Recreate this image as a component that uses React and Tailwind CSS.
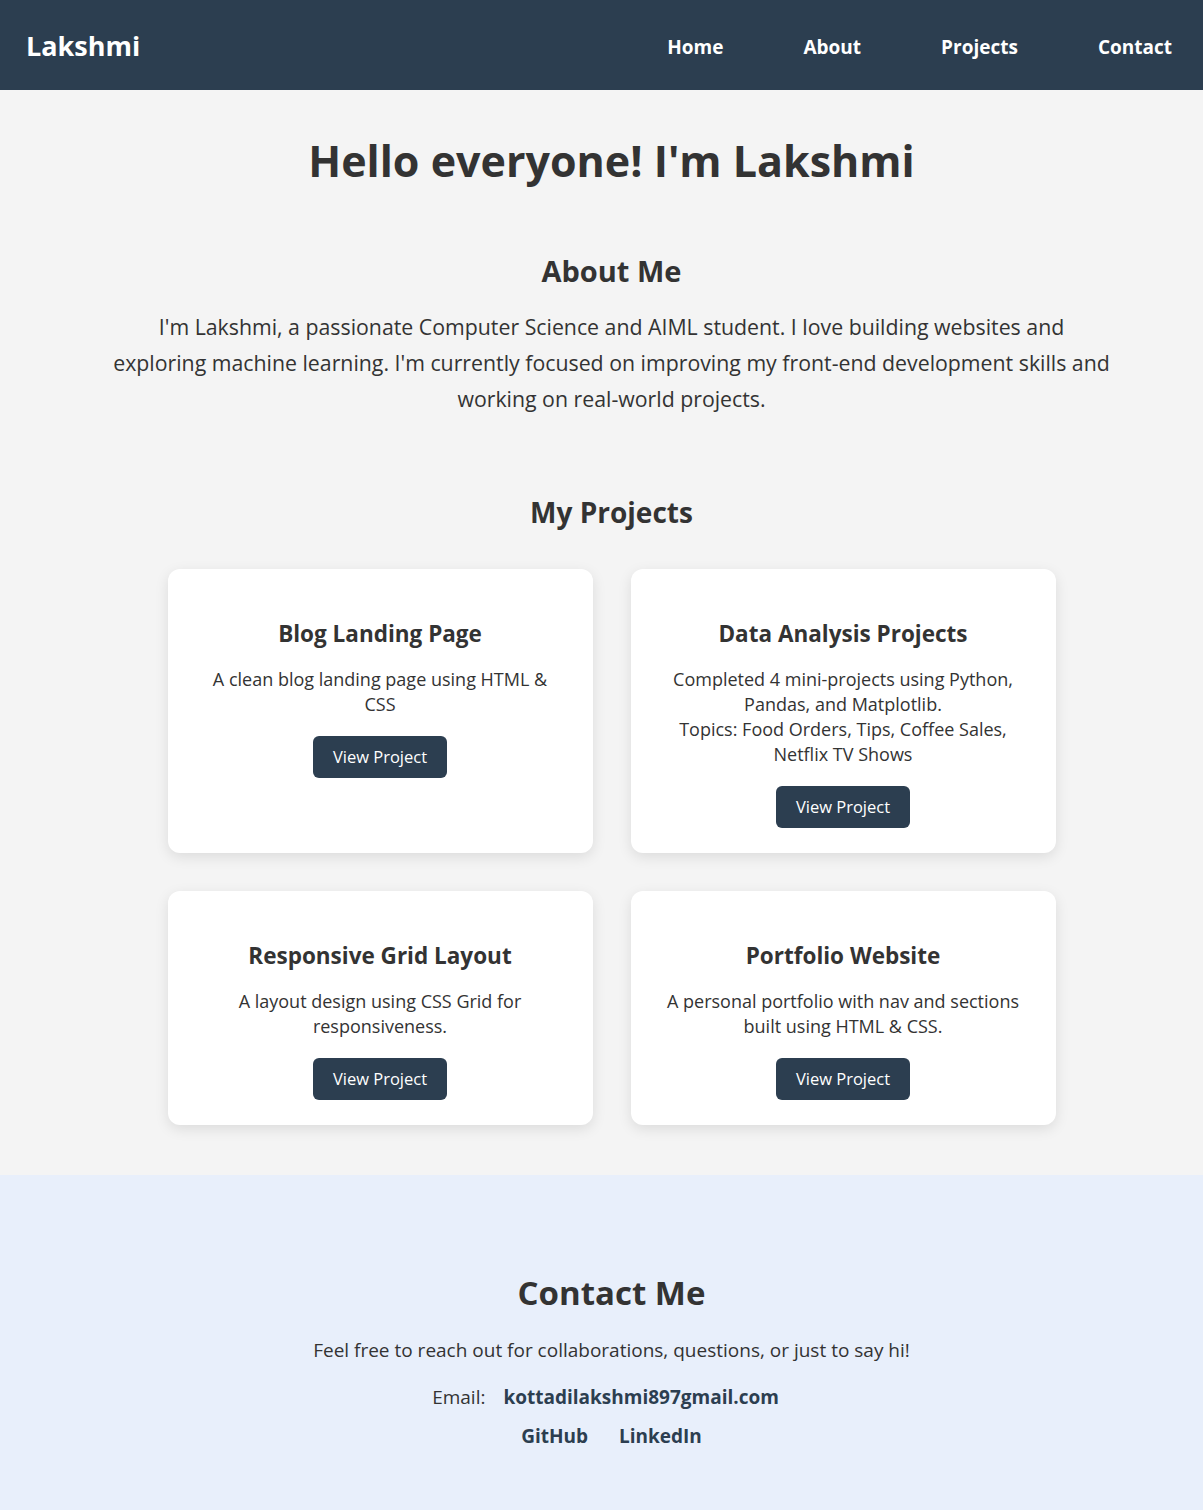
import React from "react";

const projects = [
  {
    title: "Blog Landing Page",
    desc: ["A clean blog landing page using HTML & CSS"],
  },
  {
    title: "Data Analysis Projects",
    desc: [
      "Completed 4 mini-projects using Python, Pandas, and Matplotlib.",
      "Topics: Food Orders, Tips, Coffee Sales, Netflix TV Shows",
    ],
  },
  {
    title: "Responsive Grid Layout",
    desc: ["A layout design using CSS Grid for responsiveness."],
  },
  {
    title: "Portfolio Website",
    desc: ["A personal portfolio with nav and sections built using HTML & CSS."],
  },
];

function ProjectCard({ title, desc }) {
  return (
    <div className="bg-white rounded-xl shadow-[0_4px_14px_rgba(0,0,0,0.1)] px-[35px] pt-[25px] pb-[25px] flex flex-col items-center text-center">
      <h3 className="mt-[25px] text-[22.5px] leading-[30px] font-bold text-[#333]">{title}</h3>
      <p className="mt-[18px] text-[18px] leading-[25px] text-[#333]">
        {desc.map((line, i) => (
          <React.Fragment key={i}>
            {i > 0 && <br />}
            {line}
          </React.Fragment>
        ))}
      </p>
      <button className="mt-[19px] bg-[#2c3e50] text-white text-[16.5px] leading-[22px] px-5 py-[10px] rounded-md">
        View Project
      </button>
    </div>
  );
}

export default function App() {
  return (
    <div className="min-h-screen bg-[#f4f4f4] text-[#333] font-['Open_Sans',sans-serif]">
      <header className="h-[90px] bg-[#2c3e50] flex items-center justify-between pl-[26px] pr-[31px]">
        <div className="text-white text-[27px] font-bold pt-[2px]">Lakshmi</div>
        <nav className="flex gap-[80px] text-white text-[19px] font-bold pt-[4px]">
          <a href="#home">Home</a>
          <a href="#about">About</a>
          <a href="#projects">Projects</a>
          <a href="#contact">Contact</a>
        </nav>
      </header>

      <main className="pl-[20px]">
        <section id="home" className="pt-[42px] text-center">
          <h1 className="text-[43px] leading-[58px] font-bold">Hello everyone! I'm Lakshmi</h1>
        </section>

        <section id="about" className="pt-[61px] text-center">
          <h2 className="text-[29px] leading-[40px] font-bold">About Me</h2>
          <p className="mt-[18px] text-[21.3px] leading-[36px] max-w-[1040px] mx-auto">
            I'm Lakshmi, a passionate Computer Science and AIML student. I love building websites and
            <br />
            exploring machine learning. I'm currently focused on improving my front-end development skills and
            <br />
            working on real-world projects.
          </p>
        </section>

        <section id="projects" className="pt-[75px] pb-[50px] text-center">
          <h2 className="text-[28px] leading-[40px] font-bold">My Projects</h2>
          <div className="mt-[37px] mx-auto w-[888px] grid grid-cols-2 gap-[38px]">
            {projects.map((p) => (
              <ProjectCard key={p.title} {...p} />
            ))}
          </div>
        </section>
      </main>

      <section id="contact" className="bg-[#e8effb] pl-[20px] pt-[94px] pb-[60px] text-center">
        <h2 className="text-[33px] leading-[48px] font-bold">Contact Me</h2>
        <p className="mt-[18px] text-[19px] leading-[30px]">
          Feel free to reach out for collaborations, questions, or just to say hi!
        </p>
        <p className="mt-[17px] pr-[12px] text-[19px] leading-[30px]">
          Email:
          <a href="mailto:kottadilakshmi897gmail.com" className="ml-[18px] font-bold text-[#2c3e50]">
            kottadilakshmi897gmail.com
          </a>
        </p>
        <div className="mt-[9px] flex justify-center gap-[31px] text-[19px] leading-[30px] font-bold text-[#2c3e50]">
          <a href="#github">GitHub</a>
          <a href="#linkedin">LinkedIn</a>
        </div>
      </section>
    </div>
  );
}
